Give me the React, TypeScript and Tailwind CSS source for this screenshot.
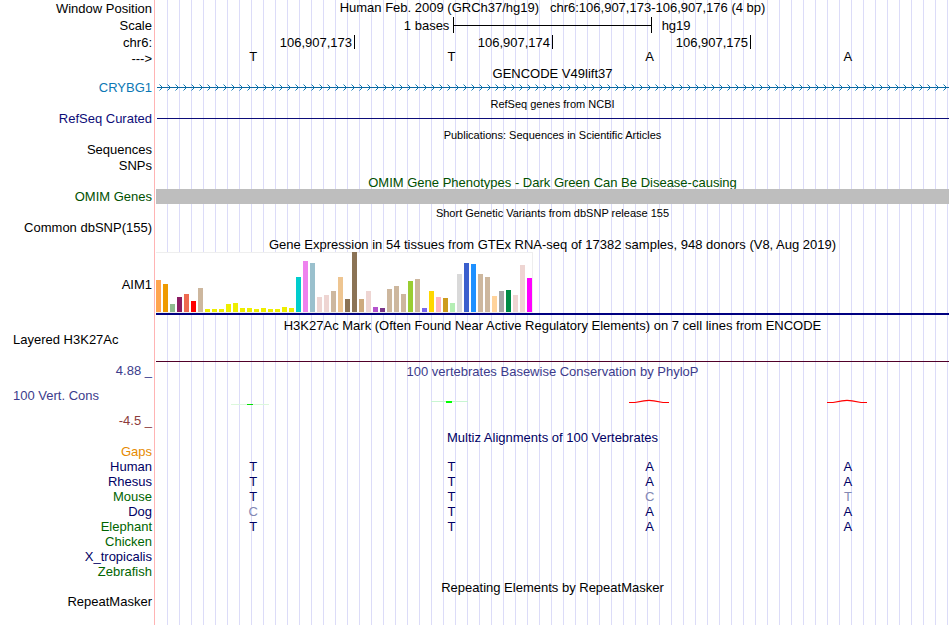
import type { ReactNode } from "react";
import clsx from "clsx";

const NBSP3 = "\u00a0\u00a0\u00a0";

const POSITIONS = ["106,907,173", "106,907,174", "106,907,175"];

const BASES = ["T", "T", "A", "A"];

// One bar per GTEx tissue: [height in px, colour].
const TISSUES: [number, string][] = [
  [32, "#ffa54f"], [28, "#ee9a00"], [8, "#8fbc8f"], [15, "#8b1c62"], [18, "#ee6a50"],
  [11, "#ff0000"], [24, "#cdb79e"], [3, "#eeee00"], [3, "#eeee00"], [3, "#eeee00"],
  [8, "#eeee00"], [9, "#eeee00"], [4, "#eeee00"], [4, "#eeee00"], [3, "#eeee00"],
  [4, "#eeee00"], [3, "#eeee00"], [3, "#eeee00"], [5, "#eeee00"], [4, "#eeee00"],
  [35, "#00cdcd"], [51, "#ee82ee"], [49, "#9ac0cd"], [15, "#eed5d2"], [17, "#eed5d2"],
  [21, "#cdb79e"], [35, "#eec591"], [13, "#8b7355"], [60, "#8b7355"], [13, "#cdaa7d"],
  [21, "#eed5d2"], [5, "#b452cd"], [4, "#7a378b"], [23, "#cdb79e"], [26, "#cdb79e"],
  [18, "#cdb79e"], [31, "#9acd32"], [33, "#cdb79e"], [4, "#7a67ee"], [21, "#ffd700"],
  [15, "#ffb6c1"], [14, "#cd9b1d"], [9, "#b4eeb4"], [38, "#d9d9d9"], [49, "#3a5fcd"],
  [48, "#1e90ff"], [38, "#cdb79e"], [35, "#cdb79e"], [16, "#ffd39b"], [21, "#a6a6a6"],
  [22, "#008b45"], [17, "#eed5d2"], [47, "#eed5d2"], [34, "#ff00ff"],
];

// Lower case marks a base that differs from the human sequence.
const SPECIES = [
  { name: "Gaps", color: "text-[#e68a00]", bases: "" },
  { name: "Human", color: "text-[#000064]", bases: "TTAA" },
  { name: "Rhesus", color: "text-[#000064]", bases: "TTAA" },
  { name: "Mouse", color: "text-[#006400]", bases: "TTct" },
  { name: "Dog", color: "text-[#000064]", bases: "cTAA" },
  { name: "Elephant", color: "text-[#006400]", bases: "TTAA" },
  { name: "Chicken", color: "text-[#006400]", bases: "" },
  { name: "X_tropicalis", color: "text-[#000064]", bases: "" },
  { name: "Zebrafish", color: "text-[#006400]", bases: "" },
];

type RowProps = {
  height: string;
  label?: ReactNode;
  labelClass?: string;
  children?: ReactNode;
};

// A strip of the browser: label on the left, track with guide lines on the right.
function Row({ height, label, labelClass, children }: RowProps) {
  return (
    <div className={clsx("flex", height)}>
      <div
        className={clsx(
          "flex w-[155px] shrink-0 border-r border-[#ffb4b4] whitespace-nowrap pr-0.5",
          labelClass ?? "items-center justify-end",
        )}
      >
        {label}
      </div>
      <div className="ml-px min-w-0 flex-1 bg-[repeating-linear-gradient(to_right,transparent_0px,transparent_11px,#dcdcf8_11px,#dcdcf8_12px)]">
        {children}
      </div>
    </div>
  );
}

function Title({ children, className }: { children: ReactNode; className?: string }) {
  return (
    <h2 className={clsx("flex h-full items-center justify-center whitespace-nowrap pt-0.5", className)}>
      {children}
    </h2>
  );
}

function BaseCells({ bases, className }: { bases: string[]; className?: string }) {
  return (
    <div className={clsx("grid grid-cols-4 text-center", className)}>
      {bases.map((base, i) => (
        <span key={i} className={clsx("pr-1", base === base.toLowerCase() && "text-[#8288b4]")}>
          {base.toUpperCase()}
        </span>
      ))}
    </div>
  );
}

function GeneLine() {
  return (
    <svg className="block h-full w-full pl-px" aria-hidden>
      <defs>
        <pattern id="strand" width="8" height="15" patternUnits="userSpaceOnUse">
          <path d="M2.5 4.5 L5.5 7.5 L2.5 10.5" fill="none" stroke="#0c78b4" strokeWidth="1" />
          <rect x="0" y="7" width="8" height="1" fill="#0c68a0" />
        </pattern>
      </defs>
      <rect width="100%" height="15" fill="url(#strand)" />
    </svg>
  );
}

function ExpressionChart() {
  return (
    <div className="h-[63px] border-b-2 border-[#000080]">
      <div className="flex h-[61px] w-[377px] items-end gap-0.5 border-r border-b border-[#eeeeee] bg-white shadow-[inset_0_1px_0_#eeeeee]">
        {TISSUES.map(([height, color], i) => (
          <div key={i} className="w-[5px] shrink-0" style={{ height, backgroundColor: color }} />
        ))}
      </div>
    </div>
  );
}

function Conservation() {
  const hill = (
    <path d="M1 23.5 H7 L16 21.8 Q21 20.8 26 21.8 L35 23.5 H41" fill="none" stroke="#ff0000" strokeWidth="1.2" />
  );
  return (
    <div className="grid h-full grid-cols-4 justify-items-center" aria-hidden>
      <svg width="48" height="32" className="block">
        <rect x="0" y="25" width="38" height="1" fill="#dcf8dc" />
        <rect x="16" y="25" width="6" height="1" fill="#00e000" />
      </svg>
      <svg width="48" height="32" className="block">
        <rect x="2" y="22" width="37" height="1" fill="#c8f5d2" />
        <rect x="17" y="22" width="6" height="2" fill="#00ff00" />
      </svg>
      <svg width="48" height="32" className="block">{hill}</svg>
      <svg width="48" height="32" className="block">{hill}</svg>
    </div>
  );
}

export default function App() {
  return (
    <main className="flex min-h-screen flex-col overflow-hidden bg-white pr-px font-['Liberation_Sans',Arial,sans-serif] text-[13px] leading-[15px] text-black">
      <Row height="h-[17px]" label="Window Position">
        <h1 className="flex h-[15px] items-center justify-center whitespace-nowrap">
          Human Feb. 2009 (GRCh37/hg19){NBSP3}chr6:106,907,173-106,907,176 (4 bp)
        </h1>
      </Row>
      <Row height="h-[17px]" label="Scale">
        <div className="flex h-4 items-center">
          <span className="w-[37.5%] pr-1 text-right">1 bases</span>
          <div className="flex h-full w-1/4 items-center border-x border-black">
            <div className="h-px w-full bg-black" />
          </div>
          <span className="pl-2.5">hg19</span>
        </div>
      </Row>
      <Row height="h-[17px]" label="chr6:">
        <div className="ml-px grid grid-cols-4 pt-px text-right">
          {POSITIONS.map((position) => (
            <span key={position} className="h-3.5 border-r border-black pr-0.5">
              {position}
            </span>
          ))}
        </div>
      </Row>
      <Row height="h-3.5" label="--->">
        <BaseCells bases={BASES} className="leading-[11px]" />
      </Row>

      <Row height="h-[15px]">
        <Title>GENCODE V49lift37</Title>
      </Row>
      <Row height="h-[15px]" label={<span className="text-[#0c78b4]">CRYBG1</span>}>
        <GeneLine />
      </Row>

      <Row height="h-4">
        <Title className="text-[11px]">RefSeq genes from NCBI</Title>
      </Row>
      <Row height="h-[15px]" label={<span className="text-[#0c0c78]">RefSeq Curated</span>}>
        <div className="flex h-full items-center pl-px">
          <div className="h-px w-full bg-[#0c0c78]" />
        </div>
      </Row>

      <Row height="h-4">
        <Title className="text-[11px]">Publications: Sequences in Scientific Articles</Title>
      </Row>
      <Row height="h-[15px]" label="Sequences" />
      <Row height="h-[17px]" label="SNPs" />

      <Row height="h-[15px]">
        <Title className="text-[#005000]">OMIM Gene Phenotypes - Dark Green Can Be Disease-causing</Title>
      </Row>
      <Row height="h-[15px]" label={<span className="text-[#005000]">OMIM Genes</span>}>
        <div className="h-full bg-[#bebebe]" />
      </Row>

      <Row height="h-4">
        <Title className="text-[11px]">Short Genetic Variants from dbSNP release 155</Title>
      </Row>
      <Row height="h-[15px]" label="Common dbSNP(155)" />

      <Row height="h-[17px]">
        <Title>Gene Expression in 54 tissues from GTEx RNA-seq of 17382 samples, 948 donors (V8, Aug 2019)</Title>
      </Row>
      <Row height="h-[65px]" label="AIM1">
        <ExpressionChart />
      </Row>

      <Row height="h-[15px]">
        <Title>H3K27Ac Mark (Often Found Near Active Regulatory Elements) on 7 cell lines from ENCODE</Title>
      </Row>
      <Row height="h-[30px]" label="Layered H3K27Ac" labelClass="items-start justify-start pl-[13px]">
        <div className="h-full border-b border-[#500028]" />
      </Row>

      <Row height="h-[17px]" label={<span className="text-[#3c3c8c]">4.88 _</span>}>
        <Title className="text-[#3c3c8c]">100 vertebrates Basewise Conservation by PhyloP</Title>
      </Row>
      <Row
        height="h-8"
        label="100 Vert. Cons"
        labelClass="items-center justify-start pl-[13px] text-[#3c3c8c]"
      >
        <Conservation />
      </Row>
      <Row height="h-[18px]" label={<span className="text-[#8c3c3c]">-4.5 _</span>} />

      <Row height="h-[15px]">
        <Title className="text-[#000064]">Multiz Alignments of 100 Vertebrates</Title>
      </Row>
      {SPECIES.map(({ name, color, bases }) => (
        <Row key={name} height="h-[15px]" label={<span className={color}>{name}</span>}>
          <BaseCells bases={bases.split("")} className="text-[#000064]" />
        </Row>
      ))}

      <Row height="h-[15px]">
        <Title>Repeating Elements by RepeatMasker</Title>
      </Row>
      <Row height="h-[15px]" label="RepeatMasker" />
      <Row height="flex-1" />
    </main>
  );
}
